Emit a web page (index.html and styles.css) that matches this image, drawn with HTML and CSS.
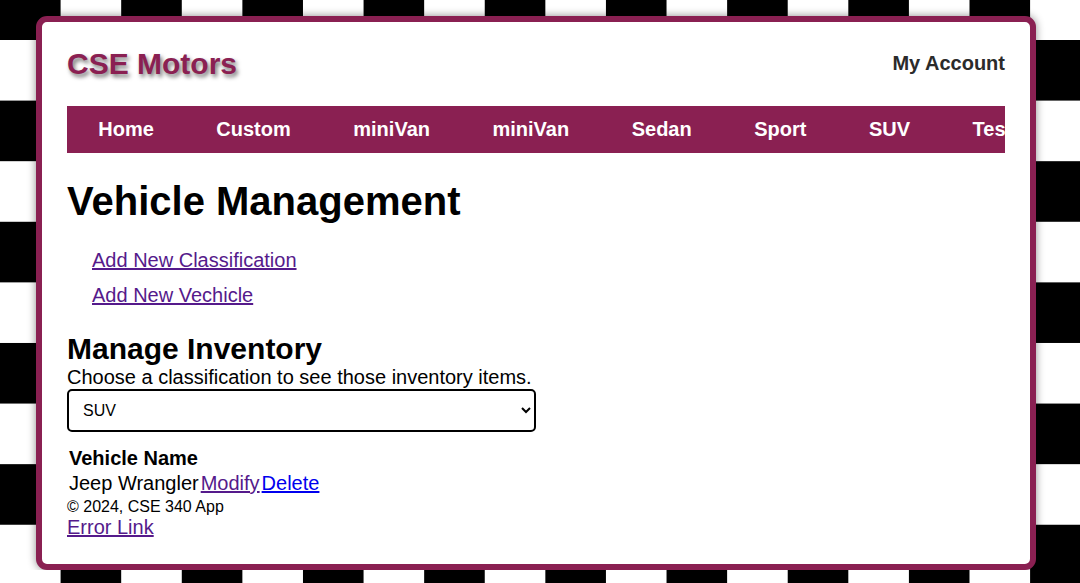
FILE: index.html
```html
<!DOCTYPE html>
<html lang="en">
<head>
<meta charset="utf-8">
<title>Vehicle Management | CSE Motors</title>
<link rel="stylesheet" href="styles.css">
</head>
<body>
<div class="wrapper">
  <header class="top-header">
    <span class="site-name">CSE Motors</span>
    <a class="account" href="#">My Account</a>
  </header>
  <nav class="main-nav">
    <ul>
      <li><a href="#">Home</a></li>
      <li><a href="#">Custom</a></li>
      <li><a href="#">miniVan</a></li>
      <li><a href="#">miniVan</a></li>
      <li><a href="#">Sedan</a></li>
      <li><a href="#">Sport</a></li>
      <li><a href="#">SUV</a></li>
      <li><a href="#">Test</a></li>
      <li><a href="#">Truck</a></li>
    </ul>
  </nav>
  <main>
    <h1>Vehicle Management</h1>
    <ul class="mgmt-links">
      <li><a class="visited" href="#">Add New Classification</a></li>
      <li><a class="visited" href="#">Add New Vechicle</a></li>
    </ul>
    <h2>Manage Inventory</h2>
    <p class="intro">Choose a classification to see those inventory items.</p>
    <select class="class-select">
      <option>Custom</option>
      <option>miniVan</option>
      <option>Sedan</option>
      <option>Sport</option>
      <option selected>SUV</option>
      <option>Truck</option>
    </select>
    <table class="inv-table">
      <thead>
        <tr><th>Vehicle Name</th></tr>
      </thead>
      <tbody>
        <tr>
          <td>Jeep Wrangler</td>
          <td><a class="visited" href="#">Modify</a></td>
          <td><a class="unvisited" href="#">Delete</a></td>
        </tr>
      </tbody>
    </table>
  </main>
  <footer class="site-footer">
    <p class="copy">&copy; 2024, CSE 340 App</p>
    <a class="visited error-link" href="#">Error Link</a>
  </footer>
</div>
</body>
</html>
```

FILE: styles.css
```css
html {
  background-color: #fff;
  background-image: repeating-conic-gradient(#fff 0 25%, #000 0 50%);
  background-size: 121.2px 121.2px;
  background-position: 0 -20.6px;
  min-height: 100%;
}

body {
  margin: 0;
  font-family: "Liberation Sans", Arial, sans-serif;
  font-size: 20px;
  line-height: 23px;
  color: #000;
}

.wrapper {
  box-sizing: border-box;
  width: 1000px;
  margin: 16px 0 0 36px;
  padding: 25px;
  background: #fff;
  border: 6px solid #8a2052;
  border-radius: 11px;
  box-shadow: 0 0 9px rgba(0, 0, 0, 0.45);
}

.top-header {
  display: flex;
  justify-content: space-between;
  align-items: center;
  padding-bottom: 25px;
}

.site-name {
  font-size: 30px;
  line-height: 34px;
  font-weight: bold;
  color: #8a2052;
  text-shadow: 2px 3px 4px rgba(0, 0, 0, 0.55);
}

.account {
  font-weight: bold;
  color: #2b2b2b;
  text-decoration: none;
  margin-bottom: 2px;
}

.main-nav {
  background: #8a2052;
  overflow: hidden;
}

.main-nav ul {
  display: flex;
  margin: 0;
  padding: 0;
  list-style: none;
}

.main-nav li {
  flex: none;
}

.main-nav a {
  display: block;
  padding: 12px 31.25px;
  color: #fff;
  font-weight: bold;
  text-decoration: none;
  white-space: nowrap;
}

h1 {
  margin: 26px 0 0;
  font-size: 40px;
  line-height: 45px;
}

.mgmt-links {
  display: flex;
  flex-direction: column;
  gap: 12px;
  margin: 25px 0;
  padding-left: 25px;
  list-style: none;
}

h2 {
  margin: 0;
  font-size: 30px;
  line-height: 34px;
}

.intro {
  margin: 0;
}

.class-select {
  display: block;
  box-sizing: border-box;
  width: 50%;
  height: 43px;
  padding: 0 10px;
  font-family: "Liberation Sans", Arial, sans-serif;
  font-size: 16px;
  color: #000;
  background: #fff;
  border: 2px solid #000;
  border-radius: 5px;
}

.inv-table {
  margin-top: 13px;
  border-spacing: 2px;
}

.inv-table th,
.inv-table td {
  padding: 0;
  text-align: left;
}

.visited {
  color: #551a8b;
}

.unvisited {
  color: #0000ee;
}

.site-footer .copy {
  margin: 1px 0 0;
  font-size: 16px;
  line-height: 18px;
}

.error-link {
  display: inline-block;
}
```
